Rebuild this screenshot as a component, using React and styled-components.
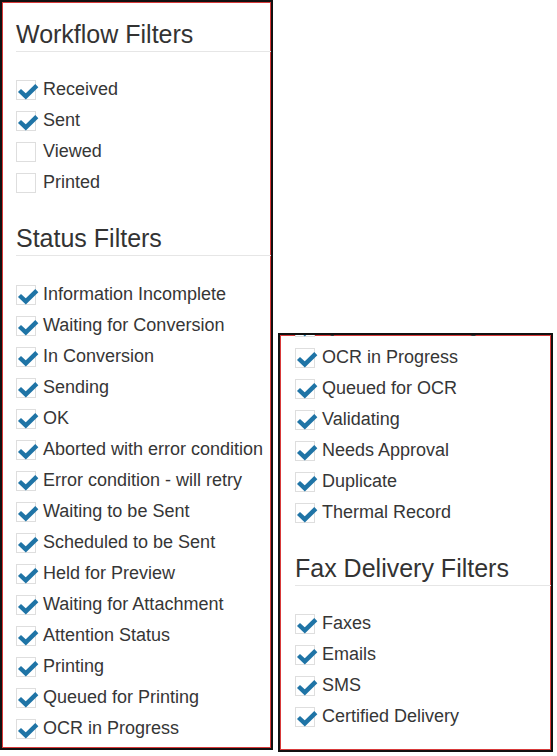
import React from "react";
import styled, { createGlobalStyle } from "styled-components";

const GlobalStyle = createGlobalStyle`
  body {
    margin: 0;
    background: #fff;
    font-family: "Liberation Sans", Arial, sans-serif;
  }
`;

const Page = styled.div`
  display: flex;
  align-items: flex-start;
  gap: 5px;
`;

const Panel = styled.div`
  box-sizing: border-box;
  width: ${(p) => p.$width}px;
  height: ${(p) => p.$height}px;
  margin-top: ${(p) => p.$top || 0}px;
  padding-left: ${(p) => p.$inset}px;
  border: 2px solid #111;
  box-shadow: inset 0 0 0 1px #d83a3a;
  background: #fff;
  overflow: hidden;
`;

// the right panel is the same filter list, scrolled down a bit
const Scrolled = styled.div`
  margin-top: ${(p) => -p.$scroll}px;
`;

const Heading = styled.h2`
  margin: ${(p) => (p.$first ? 17 : 25)}px 0 0;
  padding-bottom: 2px;
  border-bottom: 1px solid #e6e6e6;
  font-size: 25px;
  line-height: 30px;
  font-weight: normal;
  color: #333;
`;

const List = styled.ul`
  margin: 0;
  padding: ${(p) => p.$pad ?? 23}px 0 0;
  list-style: none;
`;

const Row = styled.li`
  display: flex;
  align-items: center;
  gap: 7px;
  height: 31px;
  font-size: 18px;
  color: #363636;
  white-space: nowrap;
`;

const Box = styled.span`
  box-sizing: border-box;
  flex: none;
  width: 20px;
  height: 20px;
  border: 1px solid #dedede;
  background: #fff;

  svg {
    display: block;
    overflow: visible;
  }
`;

const Tick = () => (
  <svg width="20" height="20" viewBox="0 0 20 20">
    <path
      d="M2.5 9.5 L8.8 15.4 L19.8 4.6"
      fill="none"
      stroke="#1f74a6"
      strokeWidth="4.4"
      strokeLinejoin="miter"
    />
  </svg>
);

function Check({ label, checked }) {
  return (
    <Row>
      <Box>{checked && <Tick />}</Box>
      {label}
    </Row>
  );
}

const workflow = [
  ["Received", true],
  ["Sent", true],
  ["Viewed", false],
  ["Printed", false],
];

const status = [
  "Information Incomplete",
  "Waiting for Conversion",
  "In Conversion",
  "Sending",
  "OK",
  "Aborted with error condition",
  "Error condition - will retry",
  "Waiting to be Sent",
  "Scheduled to be Sent",
  "Held for Preview",
  "Waiting for Attachment",
  "Attention Status",
  "Printing",
  "Queued for Printing",
  "OCR in Progress",
];

const statusTail = [
  "Queued for Printing",
  "OCR in Progress",
  "Queued for OCR",
  "Validating",
  "Needs Approval",
  "Duplicate",
  "Thermal Record",
];

const delivery = ["Faxes", "Emails", "SMS", "Certified Delivery"];

export default function App() {
  return (
    <>
      <GlobalStyle />
      <Page>
        <Panel $width={273} $height={750} $inset={14}>
          <Heading $first>Workflow Filters</Heading>
          <List $pad={22}>
            {workflow.map(([label, on]) => (
              <Check key={label} label={label} checked={on} />
            ))}
          </List>
          <Heading>Status Filters</Heading>
          <List>
            {status.map((label) => (
              <Check key={label} label={label} checked />
            ))}
          </List>
        </Panel>

        <Panel $width={275} $height={419} $top={333} $inset={15}>
          <Scrolled $scroll={24}>
            <List $pad={0}>
              {statusTail.map((label) => (
                <Check key={label} label={label} checked />
              ))}
            </List>
            <Heading>Fax Delivery Filters</Heading>
            <List $pad={22}>
              {delivery.map((label) => (
                <Check key={label} label={label} checked />
              ))}
            </List>
          </Scrolled>
        </Panel>
      </Page>
    </>
  );
}
